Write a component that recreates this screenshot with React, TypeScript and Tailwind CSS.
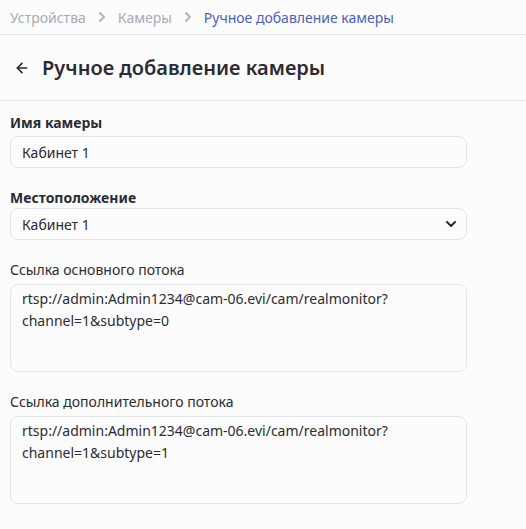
import { ArrowLeft } from 'lucide-react';

const crumbs = ['Устройства', 'Камеры'];

const inputBox =
  'w-full rounded-lg border border-[#e3e5ec] bg-[#fcfcfd] px-[11px] text-[14px] text-[#2b2b33] outline-none';

const Crumb = () => (
  <svg viewBox="0 0 6 10" className="h-[10px] w-[6px]" fill="none">
    <path d="M1 1l4 4-4 4" stroke="#b1b4bd" strokeWidth="2" strokeLinecap="round" strokeLinejoin="round" />
  </svg>
);

const AddCameraPage = () => {
  return (
    <div className="min-h-[529px] bg-[#fcfcfd] font-['Noto_Sans',sans-serif] text-[#2b2b33]">
      <nav className="flex h-[35px] items-center gap-[13px] border-b border-[#e3e5ec] px-[10px] text-[14px]">
        {crumbs.map((c) => (
          <div key={c} className="flex items-center gap-[13px] text-[#a7abb6]">
            <span>{c}</span>
            <Crumb />
          </div>
        ))}
        <span className="text-[#4a5fc1]">Ручное добавление камеры</span>
      </nav>

      <div className="flex h-[66px] items-center gap-[12px] border-b border-[#e3e5ec] px-[14px]">
        <ArrowLeft className="h-[16px] w-[16px] text-[#2b2b33]" strokeWidth={2.5} />
        <h1 className="text-[20px] font-semibold">Ручное добавление камеры</h1>
      </div>

      <form className="flex w-[477px] flex-col px-[10px] pt-[11px]">
        <label className="mb-[3px] text-[14px] font-bold">Имя камеры</label>
        <input className={`${inputBox} h-[32px]`} defaultValue="Кабинет 1" />

        <label className="mt-[19px] text-[14px] font-bold">Местоположение</label>
        <div className={`${inputBox} flex h-[32px] items-center justify-between pr-[10px]`}>
          <span>Кабинет 1</span>
          <svg viewBox="0 0 10 6" className="h-[6px] w-[10px]" fill="none">
            <path d="M1 1l4 4 4-4" stroke="#2b2b33" strokeWidth="2" strokeLinecap="round" strokeLinejoin="round" />
          </svg>
        </div>

        <label className="mb-[4px] mt-[19px] text-[14px]">Ссылка основного потока</label>
        <textarea
          className={`${inputBox} h-[88px] resize-none py-[3px] leading-[22px]`}
          defaultValue="rtsp://admin:Admin1234@cam-06.evi/cam/realmonitor?channel=1&subtype=0"
        />

        <label className="mb-[4px] mt-[19px] text-[14px]">Ссылка дополнительного потока</label>
        <textarea
          className={`${inputBox} h-[88px] resize-none py-[3px] leading-[22px]`}
          defaultValue="rtsp://admin:Admin1234@cam-06.evi/cam/realmonitor?channel=1&subtype=1"
        />
      </form>
    </div>
  );
};

export default function App() {
  return <AddCameraPage />;
}
